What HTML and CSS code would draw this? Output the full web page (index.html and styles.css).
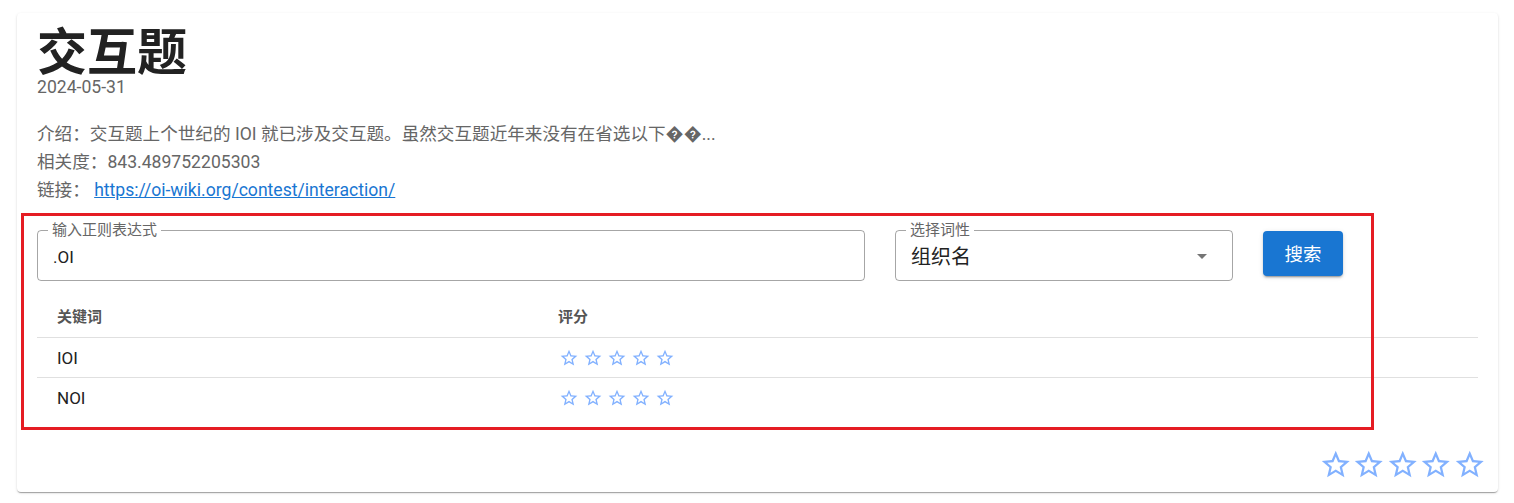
FILE: index.html
```
<!DOCTYPE html>
<html lang="zh">
<head>
<meta charset="utf-8">
<title>交互题</title>
<link rel="stylesheet" href="styles.css">
</head>
<body>
<div class="card">
  <h1 class="title">交互题</h1>
  <div class="date">2024-05-31</div>
  <div class="info">
    <p>介绍：交互题上个世纪的 IOI 就已涉及交互题。虽然交互题近年来没有在省选以下��...</p>
    <p>相关度：843.489752205303</p>
    <p>链接： <a href="#">https://oi-wiki.org/contest/interaction/</a></p>
  </div>
  <div class="controls">
    <fieldset class="field field-text">
      <legend>输入正则表达式</legend>
      <div class="value">.OI</div>
    </fieldset>
    <fieldset class="field field-select">
      <legend>选择词性</legend>
      <div class="value">组织名</div>
      <svg class="arrow" viewBox="0 0 24 24" width="24" height="24"><path d="M7 10l5 5 5-5z"/></svg>
    </fieldset>
    <button class="btn">搜索</button>
  </div>
  <table class="table">
    <thead>
      <tr><th class="col1">关键词</th><th>评分</th></tr>
    </thead>
    <tbody>
      <tr><td class="col1">IOI</td><td><div class="stars small">
        <svg viewBox="0 0 24 24"><path d="M22 9.24l-7.19-.62L12 2 9.19 8.63 2 9.24l5.46 4.730L5.82 21 12 17.27 18.18 21l-1.63-7.03L22 9.24zM12 15.4l-3.76 2.27 1-4.28-3.32-2.88 4.38-.38L12 6.1l1.71 4.04 4.38.38-3.32 2.88 1 4.28L12 15.4z"/></svg>
        <svg viewBox="0 0 24 24"><path d="M22 9.24l-7.19-.62L12 2 9.19 8.63 2 9.24l5.46 4.730L5.82 21 12 17.27 18.18 21l-1.63-7.03L22 9.24zM12 15.4l-3.76 2.27 1-4.28-3.32-2.88 4.38-.38L12 6.1l1.71 4.04 4.38.38-3.32 2.88 1 4.28L12 15.4z"/></svg>
        <svg viewBox="0 0 24 24"><path d="M22 9.24l-7.19-.62L12 2 9.19 8.63 2 9.24l5.46 4.730L5.82 21 12 17.27 18.18 21l-1.63-7.03L22 9.24zM12 15.4l-3.76 2.27 1-4.28-3.32-2.88 4.38-.38L12 6.1l1.71 4.04 4.38.38-3.32 2.88 1 4.28L12 15.4z"/></svg>
        <svg viewBox="0 0 24 24"><path d="M22 9.24l-7.19-.62L12 2 9.19 8.63 2 9.24l5.46 4.730L5.82 21 12 17.27 18.18 21l-1.63-7.03L22 9.24zM12 15.4l-3.76 2.27 1-4.28-3.32-2.88 4.38-.38L12 6.1l1.71 4.04 4.38.38-3.32 2.88 1 4.28L12 15.4z"/></svg>
        <svg viewBox="0 0 24 24"><path d="M22 9.24l-7.19-.62L12 2 9.19 8.63 2 9.24l5.46 4.730L5.82 21 12 17.27 18.18 21l-1.63-7.03L22 9.24zM12 15.4l-3.76 2.27 1-4.28-3.32-2.88 4.38-.38L12 6.1l1.71 4.04 4.38.38-3.32 2.88 1 4.28L12 15.4z"/></svg>
      </div></td></tr>
      <tr><td class="col1">NOI</td><td><div class="stars small">
        <svg viewBox="0 0 24 24"><path d="M22 9.24l-7.19-.62L12 2 9.19 8.63 2 9.24l5.46 4.730L5.82 21 12 17.27 18.18 21l-1.63-7.03L22 9.24zM12 15.4l-3.76 2.27 1-4.28-3.32-2.88 4.38-.38L12 6.1l1.71 4.04 4.38.38-3.32 2.88 1 4.28L12 15.4z"/></svg>
        <svg viewBox="0 0 24 24"><path d="M22 9.24l-7.19-.62L12 2 9.19 8.63 2 9.24l5.46 4.730L5.82 21 12 17.27 18.18 21l-1.63-7.03L22 9.24zM12 15.4l-3.76 2.27 1-4.28-3.32-2.88 4.38-.38L12 6.1l1.71 4.04 4.38.38-3.32 2.88 1 4.28L12 15.4z"/></svg>
        <svg viewBox="0 0 24 24"><path d="M22 9.24l-7.19-.62L12 2 9.19 8.63 2 9.24l5.46 4.730L5.82 21 12 17.27 18.18 21l-1.63-7.03L22 9.24zM12 15.4l-3.76 2.27 1-4.28-3.32-2.88 4.38-.38L12 6.1l1.71 4.04 4.38.38-3.32 2.88 1 4.28L12 15.4z"/></svg>
        <svg viewBox="0 0 24 24"><path d="M22 9.24l-7.19-.62L12 2 9.19 8.63 2 9.24l5.46 4.730L5.82 21 12 17.27 18.18 21l-1.63-7.03L22 9.24zM12 15.4l-3.76 2.27 1-4.28-3.32-2.88 4.38-.38L12 6.1l1.71 4.04 4.38.38-3.32 2.88 1 4.28L12 15.4z"/></svg>
        <svg viewBox="0 0 24 24"><path d="M22 9.24l-7.19-.62L12 2 9.19 8.63 2 9.24l5.46 4.730L5.82 21 12 17.27 18.18 21l-1.63-7.03L22 9.24zM12 15.4l-3.76 2.27 1-4.28-3.32-2.88 4.38-.38L12 6.1l1.71 4.04 4.38.38-3.32 2.88 1 4.28L12 15.4z"/></svg>
      </div></td></tr>
    </tbody>
  </table>
  <div class="stars big">
    <svg viewBox="0 0 24 24"><path d="M22 9.24l-7.19-.62L12 2 9.19 8.63 2 9.24l5.46 4.730L5.82 21 12 17.27 18.18 21l-1.63-7.03L22 9.24zM12 15.4l-3.76 2.27 1-4.28-3.32-2.88 4.38-.38L12 6.1l1.71 4.04 4.38.38-3.32 2.88 1 4.28L12 15.4z"/></svg>
    <svg viewBox="0 0 24 24"><path d="M22 9.24l-7.19-.62L12 2 9.19 8.63 2 9.24l5.46 4.730L5.82 21 12 17.27 18.18 21l-1.63-7.03L22 9.24zM12 15.4l-3.76 2.27 1-4.28-3.32-2.88 4.38-.38L12 6.1l1.71 4.04 4.38.38-3.32 2.88 1 4.28L12 15.4z"/></svg>
    <svg viewBox="0 0 24 24"><path d="M22 9.24l-7.19-.62L12 2 9.19 8.63 2 9.24l5.46 4.730L5.82 21 12 17.27 18.18 21l-1.63-7.03L22 9.24zM12 15.4l-3.76 2.27 1-4.28-3.32-2.88 4.38-.38L12 6.1l1.71 4.04 4.38.38-3.32 2.88 1 4.28L12 15.4z"/></svg>
    <svg viewBox="0 0 24 24"><path d="M22 9.24l-7.19-.62L12 2 9.19 8.63 2 9.24l5.46 4.730L5.82 21 12 17.27 18.18 21l-1.63-7.03L22 9.24zM12 15.4l-3.76 2.27 1-4.28-3.32-2.88 4.38-.38L12 6.1l1.71 4.04 4.38.38-3.32 2.88 1 4.28L12 15.4z"/></svg>
    <svg viewBox="0 0 24 24"><path d="M22 9.24l-7.19-.62L12 2 9.19 8.63 2 9.24l5.46 4.730L5.82 21 12 17.27 18.18 21l-1.63-7.03L22 9.24zM12 15.4l-3.76 2.27 1-4.28-3.32-2.88 4.38-.38L12 6.1l1.71 4.04 4.38.38-3.32 2.88 1 4.28L12 15.4z"/></svg>
  </div>
  <div class="highlight"></div>
</div>
</body>
</html>
```

FILE: styles.css
```
* { box-sizing: border-box; }

body {
  margin: 0;
  padding: 13px 16px 11px 17px;
  background: #fff;
  font-family: Roboto, "Noto Sans CJK SC", sans-serif;
  color: rgba(0, 0, 0, 0.87);
}

.card {
  position: relative;
  width: 1481px;
  height: 479px;
  background: #fff;
  border-radius: 4px;
  box-shadow: 0 2px 1px -1px rgba(0,0,0,0.2), 0 1px 1px 0 rgba(0,0,0,0.14), 0 1px 3px 0 rgba(0,0,0,0.12);
  padding: 16.5px 20px 11px 20px;
  display: flex;
  flex-direction: column;
}

.title {
  margin: 0;
  font-size: 50px;
  line-height: 47px;
  font-weight: 700;
  color: #222;
}

.date {
  font-size: 17.6px;
  line-height: 20px;
  color: #666;
}

.info {
  margin-top: 23px;
  font-size: 17.6px;
  line-height: 28px;
  color: #666;
}

.info p { margin: 0; }

.info a {
  color: #1976d2;
  text-decoration: underline;
}

.controls {
  margin-top: 27px;
  display: flex;
  align-items: flex-start;
  gap: 30px;
}

.field {
  position: relative;
  margin: 0;
  margin-top: -8px;
  height: 58px;
  border: 1px solid rgba(0, 0, 0, 0.35);
  border-radius: 4px;
  padding: 0 15px;
  min-width: 0;
}

.field legend {
  font-size: 15px;
  line-height: 15px;
  color: #666;
  padding: 0 4px;
  margin-left: -5px;
}

.field .value {
  font-size: 17px;
  line-height: 24px;
  color: #222;
  margin-top: 7px;
}

.field-text { width: 828px; }

.field-select { width: 338px; }

.field-select .value {
  font-size: 20px;
}

.arrow {
  position: absolute;
  right: 18px;
  top: 6px;
  fill: #757575;
}

.btn {
  width: 80px;
  height: 45px;
  border: none;
  border-radius: 4px;
  background: #1976d2;
  color: #fff;
  font-family: Roboto, "Noto Sans CJK SC", sans-serif;
  font-size: 18.5px;
  box-shadow: 0 3px 1px -2px rgba(0,0,0,0.2), 0 2px 2px 0 rgba(0,0,0,0.14), 0 1px 5px 0 rgba(0,0,0,0.12);
}

.table {
  margin-top: 17px;
  width: 100%;
  border-collapse: collapse;
}

.table th, .table td {
  height: 40px;
  padding: 0 0 0 20px;
  text-align: left;
  vertical-align: middle;
}

.table th {
  font-size: 15px;
  font-weight: 700;
  color: #555;
  padding-bottom: 3px;
  border-bottom: 1px solid #e0e0e0;
}

.table td {
  font-size: 17px;
  color: #222;
}

.table tbody tr:first-child td {
  border-bottom: 1px solid #e0e0e0;
}

.table .col1 { width: 501px; }

.stars {
  display: flex;
}

.stars svg { fill: #82b1ff; display: block; }

.stars.small { gap: 4px; margin-top: 1px; padding-left: 1px; }
.stars.small svg { width: 20px; height: 20px; }

.stars.big {
  margin-top: auto;
  align-self: flex-end;
  margin-right: -8px;
}
.stars.big svg { width: 33.5px; height: 33.5px; }

.highlight {
  position: absolute;
  left: 4px;
  top: 200px;
  width: 1353px;
  height: 217px;
  border: 3px solid #e51c23;
  pointer-events: none;
}
```
